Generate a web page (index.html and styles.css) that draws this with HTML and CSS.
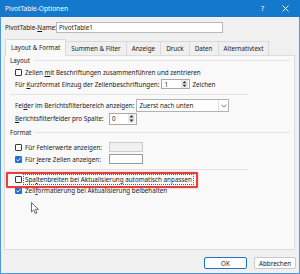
FILE: index.html
```html
<!DOCTYPE html>
<html lang="de">
<head>
<meta charset="utf-8">
<title>PivotTable-Optionen</title>
<link rel="stylesheet" href="styles.css">
</head>
<body>
<div class="window">
  <div class="titlebar">
    <span class="title">PivotTable-Optionen</span>
    <span class="tb-btns">
      <span class="help">?</span>
      <svg class="close" width="7" height="7" viewBox="0 0 7 7"><path d="M0.5 0.5 L6.5 6.5 M6.5 0.5 L0.5 6.5" stroke="#fff" stroke-width="0.9" fill="none"/></svg>
    </span>
  </div>

  <div class="name-row">
    <span class="name-label">PivotTable-<u>N</u>ame:</span>
    <div class="field name-input">PivotTable1</div>
  </div>

  <div class="tabs">
    <div class="tab active">Layout &amp; Format</div>
    <div class="tab">Summen &amp; Filter</div>
    <div class="tab">Anzeige</div>
    <div class="tab">Druck</div>
    <div class="tab">Daten</div>
    <div class="tab">Alternativtext</div>
  </div>

  <div class="panel">
    <div class="group-h"><span>Layout</span><span class="gline"></span></div>

    <div class="row row-zellen">
      <span class="cb"></span>
      <span>Zellen <u>m</u>it Beschriftungen zusammenführen und zentrieren</span>
    </div>
    <div class="row row-kurz">
      <span>Für <u>K</u>urzformat Einzug der Zeilenbeschriftungen:</span>
      <div class="spin spin-1">
        <span class="spin-val">1</span>
        <svg class="spin-btns" width="7" height="8" viewBox="0 0 7 8"><path d="M3.5 1 L5.5 3.2 L1.5 3.2 Z M3.5 7 L5.5 4.8 L1.5 4.8 Z" fill="#333"/></svg>
      </div>
      <span>Zeichen</span>
    </div>

    <div class="sep sep-1"></div>

    <div class="row row-felder">
      <span>Fel<u>d</u>er im Berichtsfilterbereich anzeigen:</span>
      <div class="select">
        <span class="select-val">Zuerst nach unten</span>
        <span class="select-arrow"><svg width="6" height="4" viewBox="0 0 6 4"><path d="M0.5 0.7 L3 3.2 L5.5 0.7" stroke="#555" stroke-width="0.8" fill="none"/></svg></span>
      </div>
    </div>
    <div class="row row-bericht">
      <span class="fixed-label"><u>B</u>erichtsfilterfelder pro Spalte:</span>
      <div class="spin spin-0">
        <span class="spin-val">0</span>
        <svg class="spin-btns" width="7" height="9" viewBox="0 0 7 9"><path d="M3.5 1 L5.5 3.4 L1.5 3.4 Z M3.5 8 L5.5 5.6 L1.5 5.6 Z" fill="#333"/></svg>
      </div>
    </div>

    <div class="group-h group-format"><span>Format</span><span class="gline"></span></div>

    <div class="row row-fehler">
      <span class="fixed-label"><span class="cb"></span><span>Für Fehlerwerte anzei<u>g</u>en:</span></span>
      <div class="field small-input disabled"></div>
    </div>
    <div class="row row-leer">
      <span class="fixed-label"><span class="cb checked"><svg width="7" height="7" viewBox="0 0 7 7"><path d="M1.4 3.6 L2.9 5 L5.7 1.9" stroke="#fff" stroke-width="0.9" fill="none"/></svg></span><span>Für <u>l</u>eere Zellen anzeigen:</span></span>
      <div class="field small-input"></div>
    </div>

    <div class="sep sep-2"></div>

    <div class="row row-spalten">
      <span class="cb"></span>
      <span class="focus-text">Spa<u>l</u>tenbreiten bei Aktualisierung automatisch anpassen</span>
    </div>
    <div class="row row-zellf">
      <span class="cb checked"><svg width="7" height="7" viewBox="0 0 7 7"><path d="M1.4 3.6 L2.9 5 L5.7 1.9" stroke="#fff" stroke-width="0.9" fill="none"/></svg></span>
      <span>Zell<u>f</u>ormatierung bei Aktualisierung beibehalten</span>
    </div>

    <div class="highlight"></div>
    <svg class="cursor" width="9" height="13" viewBox="0 0 9 13"><path d="M0.5 0.5 L0.5 10 L2.8 7.9 L4.4 11.6 L6 10.9 L4.4 7.3 L7.4 7.3 Z" fill="#fff" stroke="#333" stroke-width="0.7" stroke-linejoin="round"/></svg>
  </div>

  <div class="footer">
    <button class="btn btn-default">OK</button>
    <button class="btn">Abbrechen</button>
  </div>
</div>
</body>
</html>
```

FILE: styles.css
```css
* { box-sizing: border-box; }

html, body {
  margin: 0;
  padding: 0;
  width: 300px;
  height: 274px;
  overflow: hidden;
  background: #f0f0f0;
}

body {
  font-family: "Noto Sans", "DejaVu Sans", sans-serif;
  font-size: 6.3px;
  color: #1b1b1b;
  white-space: nowrap;
}

u { text-decoration-thickness: 0.5px; text-underline-offset: 1px; }

.window {
  width: 300px;
  height: 274px;
  background: #f0f0f0;
  border: 1px solid #4a98df;
  border-top: 0;
  display: flex;
  flex-direction: column;
  position: relative;
}

.titlebar {
  height: 17px;
  margin: 0 -1px;
  background: #1479cc;
  color: #fff;
  display: flex;
  align-items: center;
  justify-content: space-between;
  padding: 0 11px 0 5px;
  font-size: 6.6px;
}

.tb-btns {
  display: flex;
  align-items: center;
  gap: 18px;
}

.help { font-size: 7px; }

.name-row {
  margin-top: 5px;
  height: 11px;
  display: flex;
  align-items: center;
  padding-left: 4px;
}

.name-label { width: 51px; flex: none; }

.field {
  background: #fff;
  border: 1px solid #b9b9b9;
}

.name-input {
  width: 167px;
  height: 11px;
  line-height: 9px;
  padding-left: 2px;
}

.tabs {
  margin-top: 7px;
  height: 15px;
  display: flex;
  align-items: flex-end;
  padding-left: 4px;
  position: relative;
  z-index: 2;
}

.tab {
  height: 14px;
  padding: 0 5px;
  border: 1px solid #d9d9d9;
  border-bottom: 0;
  background: #f0f0f0;
  margin-left: -1px;
  display: flex;
  align-items: center;
}

.tab:first-child { margin-left: 0; }

.tab.active {
  height: 17px;
  margin-bottom: -1px;
  background: #f9f9f9;
  padding: 0 5px 2px;
  position: relative;
  z-index: 1;
}

.panel {
  margin: 0 4px 0 3px;
  height: 195px;
  border: 1px solid #dcdcdc;
  background: #f9f9f9;
  padding: 0 4px 0 5px;
  position: relative;
  display: flex;
  flex-direction: column;
}

.group-h {
  height: 8px;
  display: flex;
  align-items: center;
  gap: 4px;
}

.group-format { margin-top: 3px; height: 9px; }

.gline {
  flex: 1;
  height: 1px;
  background: #e2e2e2;
}

.row {
  display: flex;
  align-items: center;
  margin-left: 5px;
  height: 12px;
}

.cb {
  width: 7px;
  height: 7px;
  border: 1px solid #3a3a3a;
  border-radius: 1px;
  background: #fff;
  margin-right: 3px;
  flex: none;
  display: inline-block;
}

.cb.checked {
  background: #1f6fd0;
  border-color: #1f6fd0;
  position: relative;
}

.cb.checked svg {
  position: absolute;
  left: -1px;
  top: -1px;
}

.row-zellen { margin-top: 2px; }

.spin {
  display: flex;
  align-items: center;
  background: #fff;
  border: 1px solid #a9a9a9;
  margin: 0 2px;
}

.spin-1 { width: 29px; height: 10px; }
.spin-0 { width: 28px; height: 12px; margin-left: 0; }

.spin-val { flex: 1; padding-left: 2px; }

.spin-btns {
  background: #eaeaea;
  margin-right: 1px;
}

.sep {
  height: 1px;
  width: 238px;
  background: #e2e2e2;
}

.sep-1 { margin-top: 4px; }
.sep-2 { margin-top: 4px; }

.row-felder { margin-top: 4px; height: 13px; }
.row-bericht { height: 13px; }

.select {
  width: 93px;
  height: 13px;
  margin-left: 2px;
  background: #fff;
  border: 1px solid #b3b3b3;
  display: flex;
  align-items: center;
}

.select-val { flex: 1; padding-left: 2px; }

.select-arrow {
  width: 10px;
  height: 11px;
  border-left: 1px solid #e0e0e0;
  display: flex;
  align-items: center;
  justify-content: center;
}

.fixed-label {
  width: 94px;
  flex: none;
  display: flex;
  align-items: center;
}

.row-fehler { margin-top: 4px; }

.small-input {
  width: 34px;
  height: 10px;
}

.small-input.disabled {
  background: #f0f0f0;
  border-color: #cccccc;
}

.small-input:not(.disabled) { border-color: #9a9a9a; }

.row-spalten { margin-top: 4px; height: 11px; }
.row-zellf { height: 11px; }

.focus-text {
  outline: 1px dotted #5a5a5a;
  padding: 0 1px;
  margin-left: -1px;
}

.highlight {
  position: absolute;
  left: 1px;
  top: 116px;
  width: 192px;
  height: 16px;
  border: 2px solid #e6403c;
  border-radius: 1px;
  box-shadow: 0 0 2px rgba(230, 64, 60, 0.45);
  pointer-events: none;
}

.cursor {
  position: absolute;
  left: 26px;
  top: 146px;
}

.footer {
  flex: 1;
  display: flex;
  justify-content: flex-end;
  align-items: flex-start;
  gap: 7px;
  padding: 7px 3px 0 0;
}

.btn {
  font-family: inherit;
  font-size: 6.3px;
  color: #1b1b1b;
  height: 12px;
  width: 42px;
  padding: 0;
  background: #fdfdfd;
  border: 1px solid #c9c9c9;
  border-radius: 2px;
}

.btn-default {
  width: 43px;
  border: 1px solid #1d74cf;
}
```
